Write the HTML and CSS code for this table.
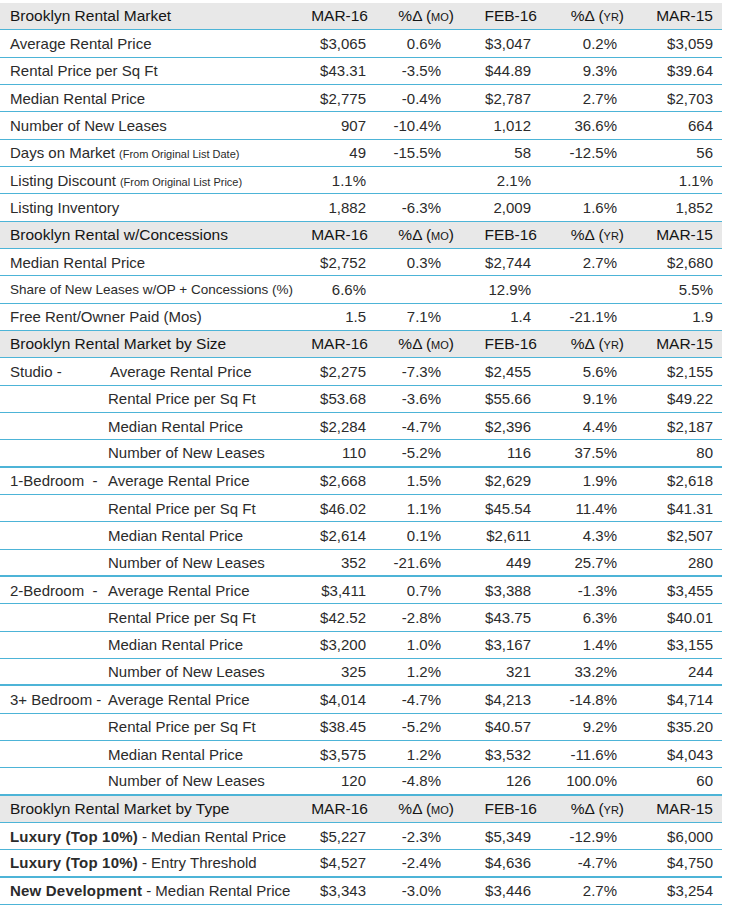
FILE: index.html
```html
<!DOCTYPE html>
<html>
<head>
<meta charset="utf-8">
<link rel="stylesheet" href="styles.css">
</head>
<body>
<div class="table">
  <div class="row head"><div class="lab">Brooklyn Rental Market</div><div class="c1">MAR-16</div><div class="c2">%Δ (<span class="sc">MO</span>)</div><div class="c3">FEB-16</div><div class="c4">%Δ (<span class="sc">YR</span>)</div><div class="c5">MAR-15</div></div>
  <div class="row"><div class="lab">Average Rental Price</div><div class="c1">$3,065</div><div class="c2">0.6%</div><div class="c3">$3,047</div><div class="c4">0.2%</div><div class="c5">$3,059</div></div>
  <div class="row"><div class="lab">Rental Price per Sq Ft</div><div class="c1">$43.31</div><div class="c2">-3.5%</div><div class="c3">$44.89</div><div class="c4">9.3%</div><div class="c5">$39.64</div></div>
  <div class="row"><div class="lab">Median Rental Price</div><div class="c1">$2,775</div><div class="c2">-0.4%</div><div class="c3">$2,787</div><div class="c4">2.7%</div><div class="c5">$2,703</div></div>
  <div class="row"><div class="lab">Number of New Leases</div><div class="c1">907</div><div class="c2">-10.4%</div><div class="c3">1,012</div><div class="c4">36.6%</div><div class="c5">664</div></div>
  <div class="row"><div class="lab">Days on Market <span class="note">(From Original List Date)</span></div><div class="c1">49</div><div class="c2">-15.5%</div><div class="c3">58</div><div class="c4">-12.5%</div><div class="c5">56</div></div>
  <div class="row"><div class="lab">Listing Discount <span class="note">(From Original List Price)</span></div><div class="c1">1.1%</div><div class="c2"></div><div class="c3">2.1%</div><div class="c4"></div><div class="c5">1.1%</div></div>
  <div class="row"><div class="lab">Listing Inventory</div><div class="c1">1,882</div><div class="c2">-6.3%</div><div class="c3">2,009</div><div class="c4">1.6%</div><div class="c5">1,852</div></div>

  <div class="row head"><div class="lab">Brooklyn Rental w/Concessions</div><div class="c1">MAR-16</div><div class="c2">%Δ (<span class="sc">MO</span>)</div><div class="c3">FEB-16</div><div class="c4">%Δ (<span class="sc">YR</span>)</div><div class="c5">MAR-15</div></div>
  <div class="row"><div class="lab">Median Rental Price</div><div class="c1">$2,752</div><div class="c2">0.3%</div><div class="c3">$2,744</div><div class="c4">2.7%</div><div class="c5">$2,680</div></div>
  <div class="row"><div class="lab small">Share of New Leases w/OP + Concessions (%)</div><div class="c1">6.6%</div><div class="c2"></div><div class="c3">12.9%</div><div class="c4"></div><div class="c5">5.5%</div></div>
  <div class="row"><div class="lab">Free Rent/Owner Paid (Mos)</div><div class="c1">1.5</div><div class="c2">7.1%</div><div class="c3">1.4</div><div class="c4">-21.1%</div><div class="c5">1.9</div></div>

  <div class="row head"><div class="lab">Brooklyn Rental Market by Size</div><div class="c1">MAR-16</div><div class="c2">%Δ (<span class="sc">MO</span>)</div><div class="c3">FEB-16</div><div class="c4">%Δ (<span class="sc">YR</span>)</div><div class="c5">MAR-15</div></div>
  <div class="row"><div class="lab"><span class="pre">Studio -</span><span class="sub first">Average Rental Price</span></div><div class="c1">$2,275</div><div class="c2">-7.3%</div><div class="c3">$2,455</div><div class="c4">5.6%</div><div class="c5">$2,155</div></div>
  <div class="row"><div class="lab"><span class="pre"></span><span class="sub">Rental Price per Sq Ft</span></div><div class="c1">$53.68</div><div class="c2">-3.6%</div><div class="c3">$55.66</div><div class="c4">9.1%</div><div class="c5">$49.22</div></div>
  <div class="row"><div class="lab"><span class="pre"></span><span class="sub">Median Rental Price</span></div><div class="c1">$2,284</div><div class="c2">-4.7%</div><div class="c3">$2,396</div><div class="c4">4.4%</div><div class="c5">$2,187</div></div>
  <div class="row thick"><div class="lab"><span class="pre"></span><span class="sub">Number of New Leases</span></div><div class="c1">110</div><div class="c2">-5.2%</div><div class="c3">116</div><div class="c4">37.5%</div><div class="c5">80</div></div>
  <div class="row"><div class="lab"><span class="pre">1-Bedroom&nbsp; -</span><span class="sub">Average Rental Price</span></div><div class="c1">$2,668</div><div class="c2">1.5%</div><div class="c3">$2,629</div><div class="c4">1.9%</div><div class="c5">$2,618</div></div>
  <div class="row"><div class="lab"><span class="pre"></span><span class="sub">Rental Price per Sq Ft</span></div><div class="c1">$46.02</div><div class="c2">1.1%</div><div class="c3">$45.54</div><div class="c4">11.4%</div><div class="c5">$41.31</div></div>
  <div class="row"><div class="lab"><span class="pre"></span><span class="sub">Median Rental Price</span></div><div class="c1">$2,614</div><div class="c2">0.1%</div><div class="c3">$2,611</div><div class="c4">4.3%</div><div class="c5">$2,507</div></div>
  <div class="row thick"><div class="lab"><span class="pre"></span><span class="sub">Number of New Leases</span></div><div class="c1">352</div><div class="c2">-21.6%</div><div class="c3">449</div><div class="c4">25.7%</div><div class="c5">280</div></div>
  <div class="row"><div class="lab"><span class="pre">2-Bedroom&nbsp; -</span><span class="sub">Average Rental Price</span></div><div class="c1">$3,411</div><div class="c2">0.7%</div><div class="c3">$3,388</div><div class="c4">-1.3%</div><div class="c5">$3,455</div></div>
  <div class="row"><div class="lab"><span class="pre"></span><span class="sub">Rental Price per Sq Ft</span></div><div class="c1">$42.52</div><div class="c2">-2.8%</div><div class="c3">$43.75</div><div class="c4">6.3%</div><div class="c5">$40.01</div></div>
  <div class="row"><div class="lab"><span class="pre"></span><span class="sub">Median Rental Price</span></div><div class="c1">$3,200</div><div class="c2">1.0%</div><div class="c3">$3,167</div><div class="c4">1.4%</div><div class="c5">$3,155</div></div>
  <div class="row thick"><div class="lab"><span class="pre"></span><span class="sub">Number of New Leases</span></div><div class="c1">325</div><div class="c2">1.2%</div><div class="c3">321</div><div class="c4">33.2%</div><div class="c5">244</div></div>
  <div class="row"><div class="lab"><span class="pre">3+ Bedroom -</span><span class="sub">Average Rental Price</span></div><div class="c1">$4,014</div><div class="c2">-4.7%</div><div class="c3">$4,213</div><div class="c4">-14.8%</div><div class="c5">$4,714</div></div>
  <div class="row"><div class="lab"><span class="pre"></span><span class="sub">Rental Price per Sq Ft</span></div><div class="c1">$38.45</div><div class="c2">-5.2%</div><div class="c3">$40.57</div><div class="c4">9.2%</div><div class="c5">$35.20</div></div>
  <div class="row"><div class="lab"><span class="pre"></span><span class="sub">Median Rental Price</span></div><div class="c1">$3,575</div><div class="c2">1.2%</div><div class="c3">$3,532</div><div class="c4">-11.6%</div><div class="c5">$4,043</div></div>
  <div class="row thick"><div class="lab"><span class="pre"></span><span class="sub">Number of New Leases</span></div><div class="c1">120</div><div class="c2">-4.8%</div><div class="c3">126</div><div class="c4">100.0%</div><div class="c5">60</div></div>

  <div class="row head"><div class="lab">Brooklyn Rental Market by Type</div><div class="c1">MAR-16</div><div class="c2">%Δ (<span class="sc">MO</span>)</div><div class="c3">FEB-16</div><div class="c4">%Δ (<span class="sc">YR</span>)</div><div class="c5">MAR-15</div></div>
  <div class="row"><div class="lab"><b>Luxury (Top 10%)</b> - Median Rental Price</div><div class="c1">$5,227</div><div class="c2">-2.3%</div><div class="c3">$5,349</div><div class="c4">-12.9%</div><div class="c5">$6,000</div></div>
  <div class="row thick"><div class="lab"><b>Luxury (Top 10%)</b> - Entry Threshold</div><div class="c1">$4,527</div><div class="c2">-2.4%</div><div class="c3">$4,636</div><div class="c4">-4.7%</div><div class="c5">$4,750</div></div>
  <div class="row"><div class="lab"><b>New Development</b> - Median Rental Price</div><div class="c1">$3,343</div><div class="c2">-3.0%</div><div class="c3">$3,446</div><div class="c4">2.7%</div><div class="c5">$3,254</div></div>
</div>
</body>
</html>
```
FILE: styles.css
```css
html, body {
  margin: 0;
  padding: 0;
  background: #ffffff;
}
body {
  font-family: "Liberation Sans", Arial, sans-serif;
  font-size: 15px;
  color: #2b2b2b;
}
.table {
  width: 722px;
  margin-top: 3px;
}
.row {
  display: grid;
  grid-template-columns: 300px 76px 90px 80px 90px 86px;
  height: 27.34px;
  box-sizing: border-box;
  border-bottom: 1px solid #4db4d7;
  align-items: center;
  white-space: nowrap;
}
.row.thick {
  border-bottom: 2px solid #4db4d7;
}
.row.head {
  background: #e8e8e8;
  color: #151515;
  font-size: 15.5px;
}
.lab {
  padding-left: 10px;
  display: flex;
  align-items: baseline;
}
.lab.small {
  font-size: 13.5px;
}
.note {
  font-size: 11px;
  margin-left: 4px;
}
.pre {
  width: 98px;
  flex: none;
}
.sub.first {
  margin-left: 2px;
}
.lab b {
  font-weight: bold;
  margin-right: 4px;
  letter-spacing: 0.2px;
}
.c1, .c2, .c3, .c4, .c5 {
  text-align: right;
}
.c1 { padding-right: 10px; }
.c2 { padding-right: 25px; }
.c3 { padding-right: 15px; }
.c4 { padding-right: 19px; }
.c5 { padding-right: 9px; }
.head .c1 { padding-right: 8px; }
.head .c2 { padding-right: 12px; }
.head .c3 { padding-right: 9px; }
.head .c4 { padding-right: 12px; }
.head .c5 { padding-right: 9px; }
.sc {
  font-size: 11px;
}
```
